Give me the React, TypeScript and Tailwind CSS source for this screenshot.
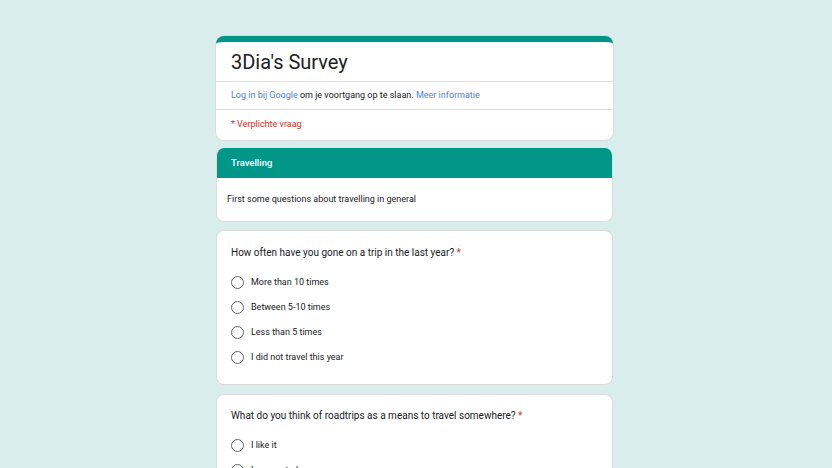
import React from 'react';

const Radio: React.FC<{ label: string }> = ({ label }) => (
  <div className="flex items-center h-[25px]">
    <span className="w-[13px] h-[13px] rounded-full border-[1.5px] border-[#5f6368] shrink-0" />
    <span className="ml-[7px] text-[9px] text-[#202124]">{label}</span>
  </div>
);

const Question: React.FC<{ title: string; options: string[]; className?: string }> = ({ title, options, className }) => (
  <div className={`bg-white rounded-lg border border-[#dadce0] px-[14px] pt-[15px] pb-[14px] ${className ?? ''}`}>
    <div className="text-[10px] text-[#202124] leading-[14px]">
      {title} <span className="text-[#d93025]">*</span>
    </div>
    <div className="mt-[10px] flex flex-col">
      {options.map((o) => (
        <Radio key={o} label={o} />
      ))}
    </div>
  </div>
);

export default function App() {
  return (
    <div className="h-[468px] overflow-hidden bg-[#d9eeec] pt-[36px]" style={{ fontFamily: 'Roboto, "Noto Sans", sans-serif' }}>
      <div className="w-[397px] ml-[216px] flex flex-col gap-[8px]">
        {/* header card */}
        <div className="bg-white rounded-lg border-t-[6px] border-[#009688] overflow-hidden shadow-[0_0_0_1px_#dadce0]">
          <div className="h-[40px] flex items-center px-[15px] text-[20px] text-[#202124] border-b border-[#e0e0e0]">
            3Dia's Survey
          </div>
          <div className="h-[28px] flex items-center px-[15px] text-[9px] text-[#202124] border-b border-[#e0e0e0]">
            <span className="text-[#4285f4]">Log in bij Google</span>
            <span>&nbsp;om je voortgang op te slaan.&nbsp;</span>
            <span className="text-[#4285f4]">Meer informatie</span>
          </div>
          <div className="h-[30px] flex items-center px-[15px] text-[9px] text-[#d93025]">* Verplichte vraag</div>
        </div>

        {/* section card */}
        <div className="bg-white rounded-lg overflow-hidden border border-[#dadce0] border-t-0">
          <div className="h-[30px] bg-[#009688] flex items-center px-[14px] text-[9.5px] font-medium text-white">Travelling</div>
          <div className="h-[43px] flex items-center px-[10px] text-[9px] text-[#202124]">
            First some questions about travelling in general
          </div>
        </div>

        <Question
          title="How often have you gone on a trip in the last year?"
          options={['More than 10 times', 'Between 5-10 times', 'Less than 5 times', 'I did not travel this year']}
        />

        <Question
          className="mt-[1px] !pt-[14px]"
          title="What do you think of roadtrips as a means to travel somewhere?"
          options={['I like it', 'I am neutral', 'I dislike it']}
        />
      </div>
    </div>
  );
}
